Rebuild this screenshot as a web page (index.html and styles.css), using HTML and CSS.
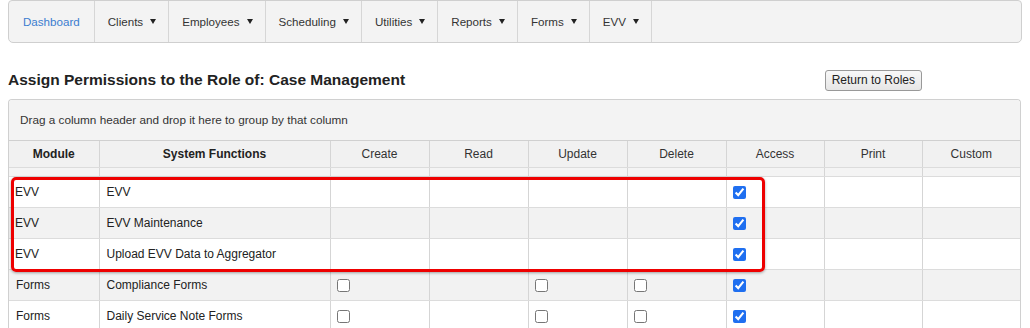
FILE: index.html
```html
<!DOCTYPE html>
<html>
<head>
<meta charset="utf-8">
<link rel="stylesheet" href="styles.css">
</head>
<body>
<nav class="menu">
  <a class="menu-item active">Dashboard</a>
  <a class="menu-item">Clients <span class="caret"></span></a>
  <a class="menu-item">Employees <span class="caret"></span></a>
  <a class="menu-item">Scheduling <span class="caret"></span></a>
  <a class="menu-item">Utilities <span class="caret"></span></a>
  <a class="menu-item">Reports <span class="caret"></span></a>
  <a class="menu-item">Forms <span class="caret"></span></a>
  <a class="menu-item">EVV <span class="caret"></span></a>
</nav>
<div class="titlebar">
  <h1 class="title">Assign Permissions to the Role of: Case Management</h1>
  <button class="btn">Return to Roles</button>
</div>
<div class="grid">
  <div class="group-panel">Drag a column header and drop it here to group by that column</div>
  <table class="perm">
    <colgroup>
      <col class="c-mod"><col class="c-fn"><col class="c-99"><col class="c-99"><col class="c-99"><col class="c-99"><col class="c-98"><col class="c-98"><col class="c-98">
    </colgroup>
    <thead>
      <tr class="head">
        <th class="b">Module</th><th class="b">System Functions</th><th>Create</th><th>Read</th><th>Update</th><th>Delete</th><th>Access</th><th>Print</th><th>Custom</th>
      </tr>
      <tr class="spacer"><td></td><td></td><td></td><td></td><td></td><td></td><td></td><td></td><td></td></tr>
    </thead>
    <tbody>
      <tr><td class="mod evv">EVV</td><td>EVV</td><td></td><td></td><td></td><td></td><td class="cb"><input type="checkbox" checked></td><td></td><td></td></tr>
      <tr class="alt"><td class="mod evv">EVV</td><td>EVV Maintenance</td><td></td><td></td><td></td><td></td><td class="cb"><input type="checkbox" checked></td><td></td><td></td></tr>
      <tr><td class="mod evv">EVV</td><td>Upload EVV Data to Aggregator</td><td></td><td></td><td></td><td></td><td class="cb"><input type="checkbox" checked></td><td></td><td></td></tr>
      <tr class="alt"><td class="mod">Forms</td><td>Compliance Forms</td><td class="cb"><input type="checkbox"></td><td></td><td class="cb"><input type="checkbox"></td><td class="cb"><input type="checkbox"></td><td class="cb"><input type="checkbox" checked></td><td></td><td></td></tr>
      <tr><td class="mod">Forms</td><td>Daily Service Note Forms</td><td class="cb"><input type="checkbox"></td><td></td><td class="cb"><input type="checkbox"></td><td class="cb"><input type="checkbox"></td><td class="cb"><input type="checkbox" checked></td><td></td><td></td></tr>
    </tbody>
  </table>
  <div class="highlight"></div>
</div>
</body>
</html>
```
FILE: styles.css
```css
html, body {
  margin: 0;
  padding: 0;
  background: #fff;
}
body {
  font-family: "Liberation Sans", Arial, sans-serif;
  font-size: 12px;
  color: #333;
  padding: 0 8px;
  overflow: hidden;
}
.menu {
  display: flex;
  height: 41px;
  border: 1px solid #cfcfcf;
  border-radius: 4px 4px 5px 5px;
  background: #f3f3f3;
  width: 1012px;
}
.menu-item {
  display: flex;
  align-items: center;
  padding: 0 12px 0 13px;
  border-right: 1px solid #d6d6d6;
  color: #333;
  font-size: 11.6px;
  white-space: nowrap;
}
.menu-item.active {
  color: #3b7dd0;
  padding: 0 14px 0 14px;
}
.caret {
  display: inline-block;
  width: 0;
  height: 0;
  margin-left: 7px;
  border-left: 3px solid transparent;
  border-right: 3px solid transparent;
  border-top: 5px solid #222;
}
.titlebar {
  display: flex;
  align-items: center;
  justify-content: space-between;
  margin-top: 26px;
  padding-right: 100px;
  height: 22px;
}
.title {
  margin: 0;
  font-size: 15.5px;
  font-weight: bold;
  color: #222;
}
.btn {
  font-family: "Liberation Sans", Arial, sans-serif;
  font-size: 12px;
  color: #222;
  height: 21px;
  padding: 0 6px;
  border: 1px solid #999;
  border-radius: 3px;
  background: linear-gradient(#f8f8f8, #e6e6e6);
}
.grid {
  position: relative;
  margin-top: 8px;
  width: 1011px;
  border: 1px solid #d0d0d0;
  border-bottom: none;
  border-radius: 4px 4px 0 0;
}
.group-panel {
  height: 40px;
  line-height: 40px;
  padding-left: 11px;
  background: #f3f3f3;
  border-bottom: 1px solid #d0d0d0;
  font-size: 11.75px;
  color: #333;
  border-radius: 4px 4px 0 0;
}
.perm {
  width: 100%;
  table-layout: fixed;
  border-collapse: collapse;
}
.c-mod { width: 90px; }
.c-fn { width: 231px; }
.c-99 { width: 99px; }
.c-98 { width: 98px; }
.perm th, .perm td {
  border-left: 1px solid #d5d5d5;
  border-bottom: 1px solid #dcdcdc;
  padding: 0 7px;
  text-align: left;
  white-space: nowrap;
}
.perm tr > :first-child { border-left: none; }
.perm th {
  height: 26px;
  background: #f1f1f1;
  font-weight: normal;
  text-align: center;
  color: #333;
  font-size: 12px;
}
.perm th.b { font-weight: bold; color: #222; }
.perm .spacer td {
  height: 8px;
  padding: 0;
  background: #f4f4f4;
}
.perm tbody td {
  height: 30px;
  font-size: 12px;
  color: #222;
}
.perm tbody tr.alt td { background: #f2f2f2; }
.perm td.mod.evv { padding-left: 6px; }
.perm td.cb { padding-left: 6px; }
.perm input[type="checkbox"] {
  margin: 0;
  width: 13px;
  height: 13px;
  vertical-align: middle;
  accent-color: #1f6ff0;
}
.highlight {
  position: absolute;
  left: 2px;
  top: 77px;
  width: 748px;
  height: 89px;
  border: 3px solid #ee0000;
  border-radius: 5px;
  box-shadow: 0 1px 3px rgba(0,0,0,0.35);
  pointer-events: none;
}
```
